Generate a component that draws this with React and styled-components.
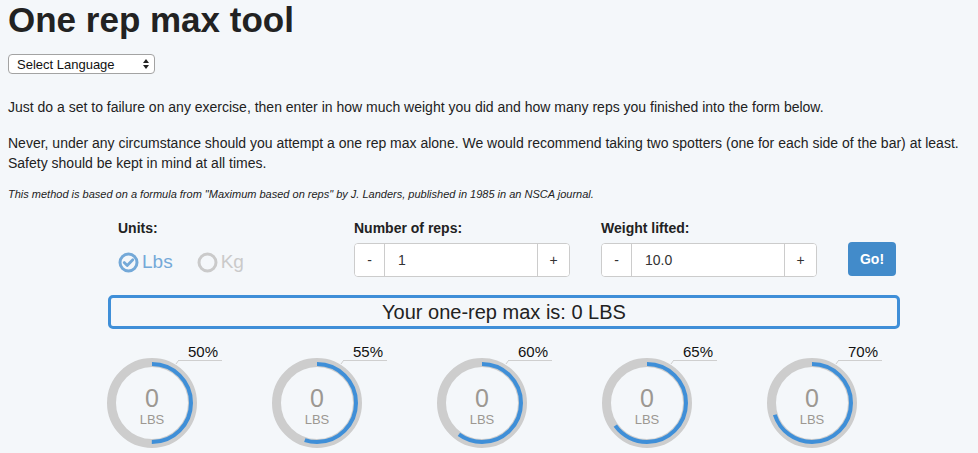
import React from 'react'
import styled, { createGlobalStyle } from 'styled-components'

const GlobalStyle = createGlobalStyle`
  body {
    margin: 0;
    padding: 0 8px;
    background: #f4f7fa;
    font-family: "Liberation Sans", Arial, sans-serif;
    color: #222;
  }
`

const Title = styled.h1`
  margin: 0;
  font-size: 35px;
  line-height: 40px;
  font-weight: bold;
  color: #222;
`

const SelectWrap = styled.div`
  position: relative;
  margin-top: 14px;
  width: 147px;
  height: 20px;
`

const Select = styled.select`
  appearance: none;
  width: 100%;
  height: 20px;
  padding: 0 0 0 8px;
  border: 1px solid #a3a3a3;
  border-radius: 4px;
  background: #fff;
  font-family: "Liberation Sans", Arial, sans-serif;
  font-size: 13px;
  color: #111;
`

const Arrows = styled.svg`
  position: absolute;
  right: 6px;
  top: 5px;
  pointer-events: none;
`

const Text = styled.p`
  margin: ${p => p.$top}px 0 0;
  font-size: 14px;
  line-height: 20px;
`

const Note = styled.p`
  margin: 14px 0 0;
  font-size: 11px;
  line-height: 14px;
  font-style: italic;
`

const Form = styled.div`
  margin: 17px 0 0 100px;
  width: 792px;
`

const Row = styled.div`
  display: grid;
  grid-template-columns: 236px 247px 247px auto;
  padding-left: 10px;
`

const Field = styled.div`
  display: flex;
  flex-direction: column;
`

const Label = styled.label`
  font-size: 14px;
  line-height: 20px;
  font-weight: bold;
  margin-bottom: 5px;
`

const Units = styled.div`
  display: flex;
  align-items: center;
  height: 34px;
  padding-top: 2px;
  gap: 24px;
`

const Radio = styled.span`
  display: flex;
  align-items: center;
  gap: 3px;
  font-size: 19px;
  color: ${p => (p.$on ? '#74a9d8' : '#cacaca')};
`

const InputGroup = styled.div`
  display: flex;
  width: 216px;
  height: 34px;
  box-sizing: border-box;
  border: 1px solid #ccc;
  border-radius: 4px;
  background: #fff;
  overflow: hidden;
`

const Step = styled.button`
  width: ${p => p.$w}px;
  border: none;
  background: #fff;
  font-family: "Liberation Sans", Arial, sans-serif;
  font-size: 14px;
  color: #333;
  padding: 0;
  border-${p => p.$side}: 1px solid #ccc;
`

const Value = styled.input`
  flex: 1;
  min-width: 0;
  border: none;
  padding: 0 13px;
  font-family: "Liberation Sans", Arial, sans-serif;
  font-size: 14px;
  color: #333;
  background: #fff;
`

const GoButton = styled.button`
  margin-top: 24px;
  width: 48px;
  height: 34px;
  border: none;
  border-radius: 4px;
  background: #428bca;
  color: #fff;
  font-family: "Liberation Sans", Arial, sans-serif;
  font-size: 14px;
  font-weight: bold;
`

const Result = styled.div`
  margin-top: 16px;
  height: 34px;
  box-sizing: border-box;
  border: 3px solid #3f8fd8;
  border-radius: 5px;
  text-align: center;
  font-size: 20px;
  line-height: 28px;
  color: #222;
`

const Gauges = styled.div`
  display: grid;
  grid-template-columns: repeat(5, 165px);
  margin: 29px 0 0 99px;
`

const Gauge = styled.div`
  position: relative;
  width: 90px;
  height: 90px;
`

const Ring = styled.svg`
  position: absolute;
  inset: 0;
  overflow: visible;
`

const Face = styled.div`
  position: relative;
  display: flex;
  flex-direction: column;
  align-items: center;
  padding-top: 27px;
  color: #9c9892;
`

const Big = styled.span`
  font-size: 25px;
  line-height: 27px;
`

const Unit = styled.span`
  font-size: 13px;
  line-height: 15px;
`

const Pct = styled.span`
  position: absolute;
  top: -14px;
  left: 71px;
  width: 34px;
  padding-left: 10px;
  height: 16px;
  font-size: 15px;
  line-height: 16px;
  color: #111;
  border-bottom: 1px solid #cfcfcf;
`

const R = 39
const C = 2 * Math.PI * R

function RadioIcon({ checked }) {
  return (
    <svg width="21" height="21" viewBox="0 0 21 21">
      <circle cx="10.5" cy="10.5" r="8.5" fill="none" stroke="currentColor" strokeWidth="3" />
      {checked && (
        <path d="M6.2 10.6 L9.2 13.5 L14.8 7.8" fill="none" stroke="currentColor" strokeWidth="2.8" strokeLinecap="round" strokeLinejoin="round" />
      )}
    </svg>
  )
}

function Circle({ pct }) {
  return (
    <Gauge>
      <Ring width="90" height="90" viewBox="0 0 90 90">
        <circle cx="45" cy="45" r="40.5" fill="none" stroke="#cdcdcd" strokeWidth="9" />
        <circle
          cx="45"
          cy="45"
          r={R}
          fill="none"
          stroke="#3f8fd8"
          strokeWidth="4"
          strokeDasharray={`${(C * pct) / 100} ${C}`}
          transform="rotate(-90 45 45)"
        />
        <line x1="69" y1="6" x2="71.5" y2="2.5" stroke="#cfcfcf" strokeWidth="1" />
      </Ring>
      <Face>
        <Big>0</Big>
        <Unit>LBS</Unit>
      </Face>
      <Pct>{pct}%</Pct>
    </Gauge>
  )
}

export default function App() {
  const percents = [50, 55, 60, 65, 70]

  return (
    <>
      <GlobalStyle />
      <Title>One rep max tool</Title>
      <SelectWrap>
        <Select defaultValue="">
          <option value="">Select Language</option>
        </Select>
        <Arrows width="6" height="10" viewBox="0 0 6 10">
          <path d="M3 0 L6 4 L0 4 Z M3 10 L6 6 L0 6 Z" fill="#222" />
        </Arrows>
      </SelectWrap>

      <Text $top={23}>
        Just do a set to failure on any exercise, then enter in how much weight you did and how many reps you finished into the form below.
      </Text>
      <Text $top={16}>
        Never, under any circumstance should you attempt a one rep max alone. We would recommend taking two spotters (one for each side of the bar) at least. Safety should be kept in mind at all times.
      </Text>
      <Note>
        This method is based on a formula from "Maximum based on reps" by J. Landers, published in 1985 in an NSCA journal.
      </Note>

      <Form>
        <Row>
          <Field>
            <Label>Units:</Label>
            <Units>
              <Radio $on><RadioIcon checked />Lbs</Radio>
              <Radio><RadioIcon />Kg</Radio>
            </Units>
          </Field>
          <Field>
            <Label>Number of reps:</Label>
            <InputGroup>
              <Step $w={30} $side="right">-</Step>
              <Value defaultValue="1" />
              <Step $w={32} $side="left">+</Step>
            </InputGroup>
          </Field>
          <Field>
            <Label>Weight lifted:</Label>
            <InputGroup>
              <Step $w={30} $side="right">-</Step>
              <Value defaultValue="10.0" />
              <Step $w={32} $side="left">+</Step>
            </InputGroup>
          </Field>
          <div>
            <GoButton>Go!</GoButton>
          </div>
        </Row>
        <Result>Your one-rep max is: 0 LBS</Result>
      </Form>

      <Gauges>
        {percents.map(p => (
          <Circle key={p} pct={p} />
        ))}
      </Gauges>
    </>
  )
}
